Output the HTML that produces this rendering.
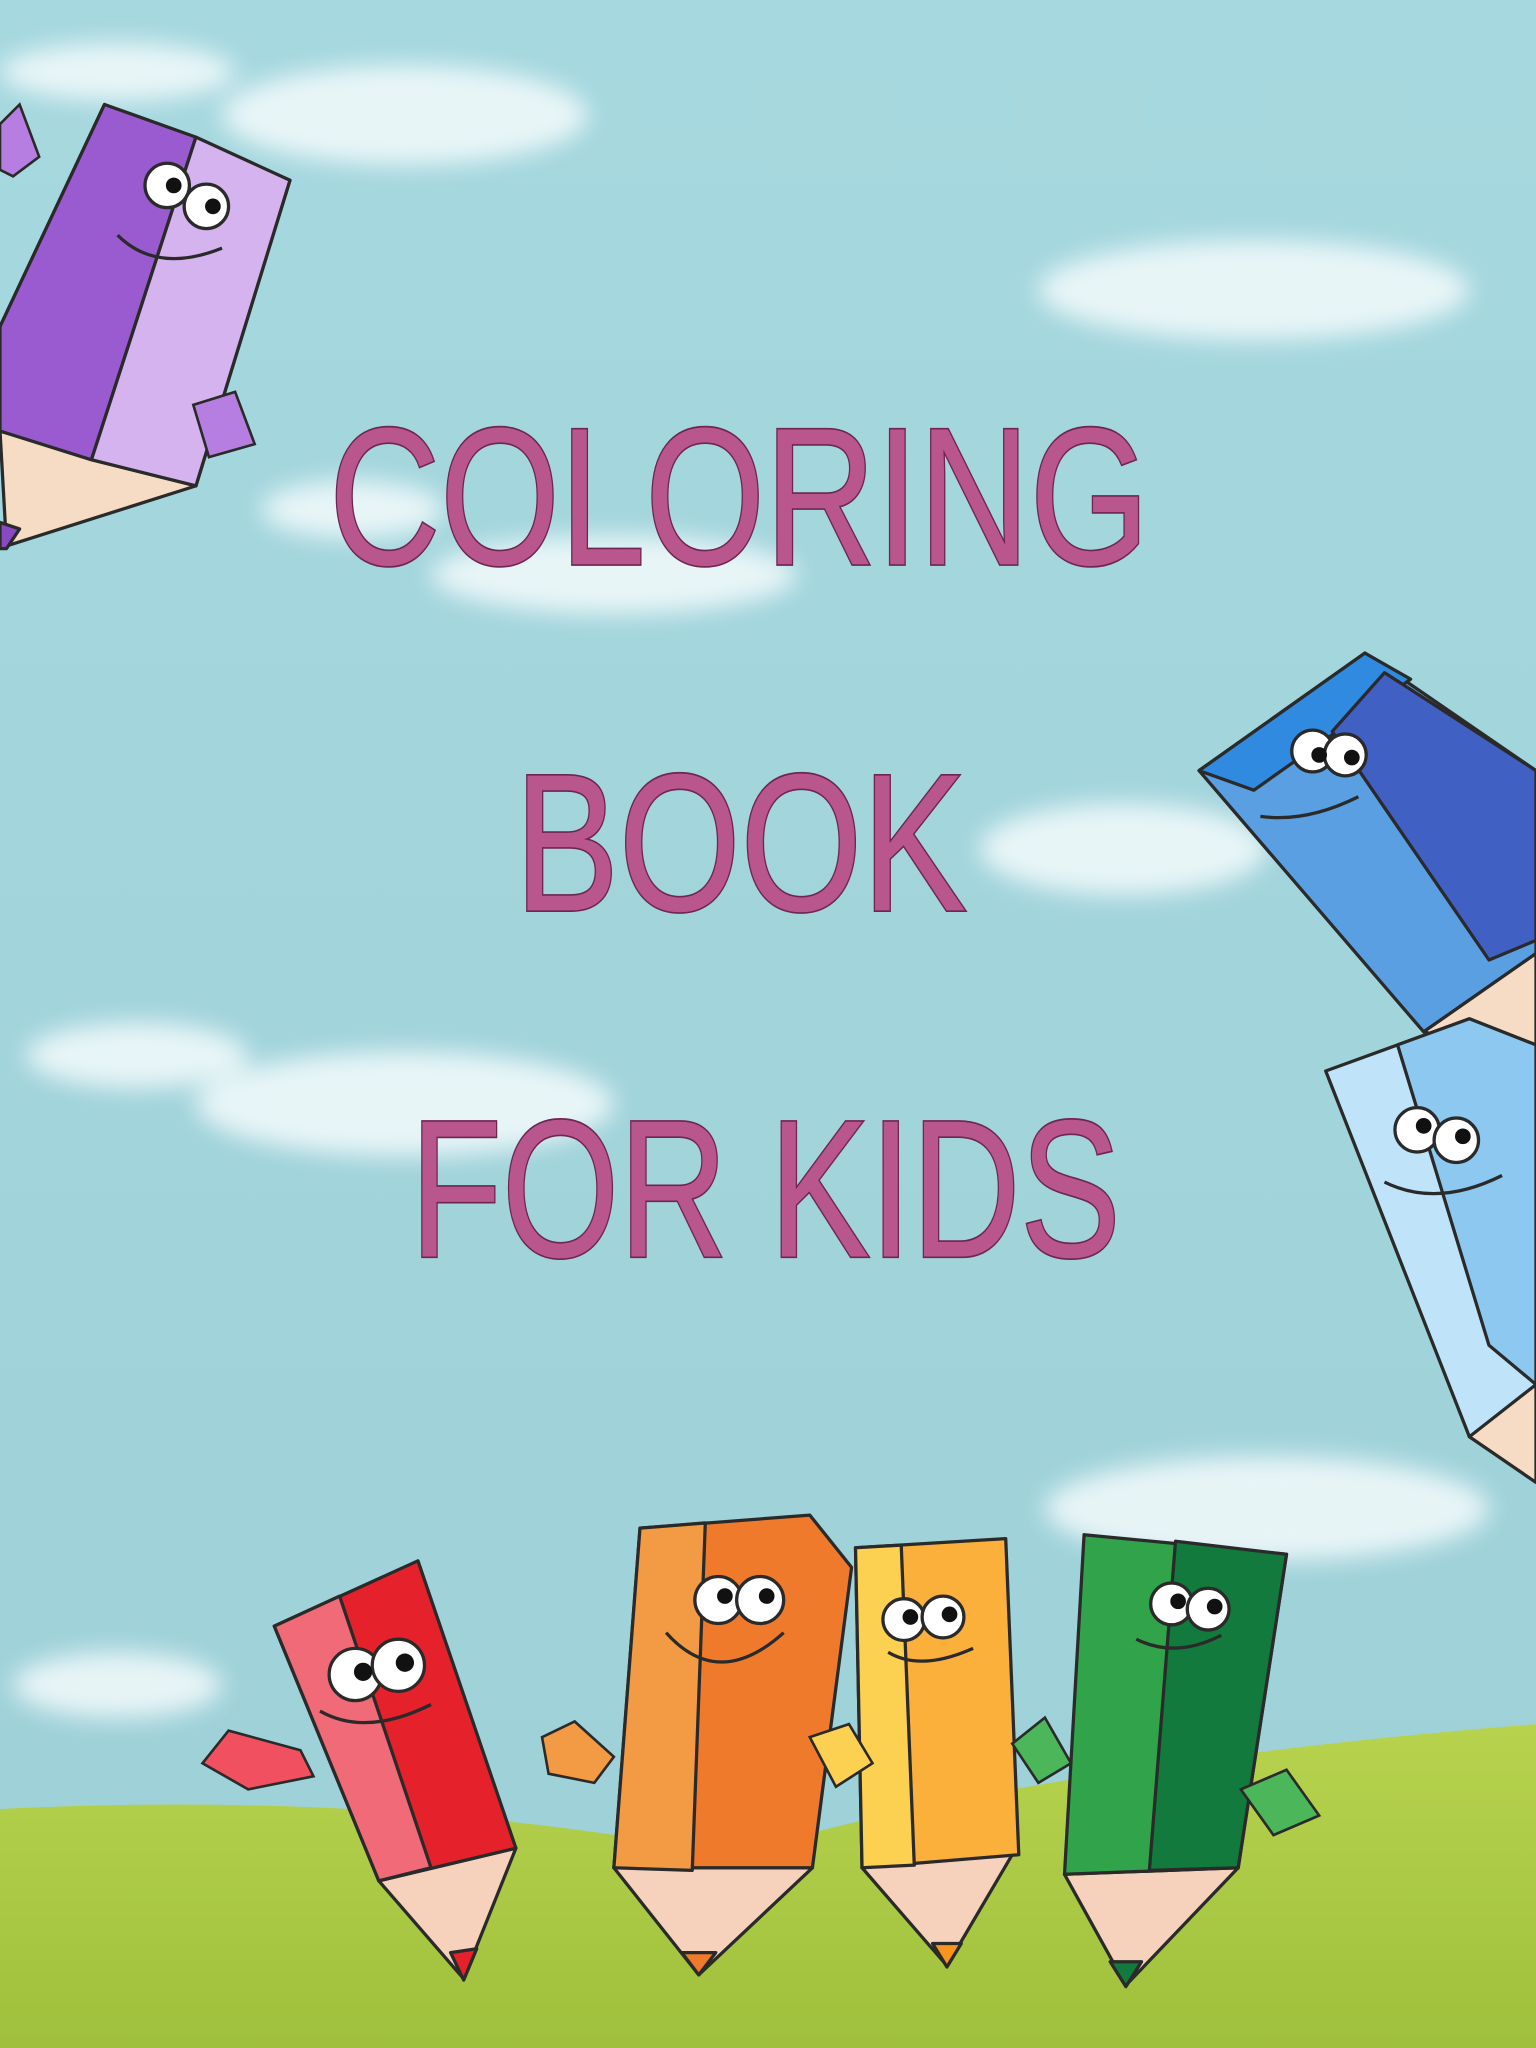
<!DOCTYPE html>
<html><head><meta charset="utf-8"><style>
html,body{margin:0;padding:0;width:1536px;height:2048px;overflow:hidden;background:#a3d6dc}
svg{display:block}
</style></head><body>
<svg width="1536" height="2048" viewBox="0 0 1176 1568" xmlns="http://www.w3.org/2000/svg">
<defs>
<linearGradient id="sky" x1="0" y1="0" x2="0" y2="1"><stop offset="0" stop-color="#a6d8df"/><stop offset="1" stop-color="#9ed0d8"/></linearGradient>
<linearGradient id="grass" x1="0" y1="0" x2="0" y2="1"><stop offset="0" stop-color="#b7d34e"/><stop offset="1" stop-color="#9fc03c"/></linearGradient>
<filter id="blur" x="-30%" y="-50%" width="160%" height="200%"><feGaussianBlur stdDeviation="9"/></filter>
</defs>
<rect width="1176" height="1568" fill="url(#sky)"/>
<g fill="#f4fbfc" opacity="0.85" filter="url(#blur)">
<ellipse cx="90" cy="55" rx="90" ry="22"/><ellipse cx="310" cy="88" rx="140" ry="38"/>
<ellipse cx="960" cy="222" rx="165" ry="38"/><ellipse cx="270" cy="390" rx="70" ry="22"/><ellipse cx="470" cy="440" rx="140" ry="30"/>
<ellipse cx="860" cy="650" rx="110" ry="35"/><ellipse cx="105" cy="808" rx="85" ry="25"/><ellipse cx="310" cy="845" rx="160" ry="40"/>
<ellipse cx="970" cy="1155" rx="170" ry="40"/><ellipse cx="90" cy="1290" rx="80" ry="25"/>
</g>
<path d="M0 1385 Q300 1370 560 1420 Q800 1350 1176 1320 L1176 1568 L0 1568Z" fill="url(#grass)"/>
<g font-family="Liberation Sans, sans-serif" font-size="150" fill="#b8568d" stroke="#6e2550" stroke-width="2.5" style="paint-order:stroke">
<text x="252" y="432" textLength="628" lengthAdjust="spacingAndGlyphs">COLORING</text>
<text x="394" y="697" textLength="346" lengthAdjust="spacingAndGlyphs">BOOK</text>
<text x="314" y="962" textLength="544" lengthAdjust="spacingAndGlyphs">FOR KIDS</text>
</g>
<g stroke="#2a2a2a" stroke-width="2.5" stroke-linejoin="round">
<!-- purple -->
<polygon points="0,330 150,372 5,418" fill="#f6dcc5"/>
<polygon points="80,80 222,138 150,372 0,330 0,250" fill="#b57ee0"/>
<polygon points="80,80 150,105 70,352 0,330 0,250" fill="#9b5bd0"/>
<polygon points="150,105 222,138 150,372 70,352" fill="#d4b3ee"/>
<polygon points="0,400 15,405 5,420 0,420" fill="#8a48c4"/>
<!-- blue -->
<polygon points="918,590 1045,500 1176,590 1176,730 1090,790" fill="#5a9fe2"/>
<polygon points="918,590 1045,500 1080,520 960,605" fill="#2f8ae0"/>
<polygon points="1060,515 1176,590 1176,720 1140,735 1020,560" fill="#4060c4"/>
<polygon points="1090,790 1176,730 1176,800 1130,800" fill="#f6dcc5"/>
<!-- light blue -->
<polygon points="1015,820 1125,780 1176,800 1176,1130 1125,1100" fill="#bfe4fa"/>
<polygon points="1070,800 1125,780 1176,800 1176,1060 1140,1030" fill="#8cc8f0"/>
<polygon points="1125,1100 1176,1060 1176,1135" fill="#f6dcc5"/>
<!-- red -->
<polygon points="290,1440 395,1415 355,1515" fill="#f6d2bc"/>
<polygon points="210,1245 320,1195 395,1415 290,1440" fill="#e5212b"/>
<polygon points="210,1245 260,1222 330,1430 290,1440" fill="#f06a78"/>
<polygon points="345,1495 365,1492 355,1516" fill="#e5212b"/>
<!-- orange -->
<polygon points="470,1430 622,1430 535,1512" fill="#f6d2bc"/>
<polygon points="490,1170 620,1160 652,1200 622,1430 470,1430" fill="#f07a2c"/>
<polygon points="490,1170 540,1166 530,1432 470,1430" fill="#f39a45"/>
<polygon points="522,1495 548,1495 535,1512" fill="#f07a2c"/>
<!-- yellow -->
<polygon points="660,1430 775,1420 725,1505" fill="#f6d2bc"/>
<polygon points="655,1185 770,1178 780,1420 660,1430" fill="#fbb03b"/>
<polygon points="655,1185 690,1183 700,1428 660,1430" fill="#fcd050"/>
<polygon points="714,1488 736,1488 725,1506" fill="#f7941d"/>
<!-- green -->
<polygon points="815,1435 948,1430 862,1520" fill="#f6d2bc"/>
<polygon points="830,1175 985,1190 948,1430 815,1435" fill="#31a34a"/>
<polygon points="900,1180 985,1190 948,1430 880,1432" fill="#127a3c"/>
<polygon points="850,1502 874,1502 862,1521" fill="#127a3c"/>
</g>
<!-- hands -->
<g fill="#f05060" stroke="#2a2a2a" stroke-width="2"><path d="M155 1350 L175 1325 L230 1340 L240 1360 L190 1370Z"/></g>
<g fill="#f39a45" stroke="#2a2a2a" stroke-width="2"><path d="M415 1330 L440 1318 L470 1345 L455 1365 L420 1358Z"/></g>
<g fill="#fcd050" stroke="#2a2a2a" stroke-width="2"><path d="M620 1330 L650 1320 L668 1350 L640 1368Z"/></g>
<g fill="#4bb65a" stroke="#2a2a2a" stroke-width="2"><path d="M775 1335 L800 1315 L820 1350 L795 1365Z"/><path d="M950 1370 L985 1355 L1010 1390 L975 1405Z"/></g>
<g fill="#b57ee0" stroke="#2a2a2a" stroke-width="2"><path d="M0 95 L15 80 L30 120 L10 135 L0 130Z"/><path d="M148 310 L180 300 L195 340 L160 350Z"/></g>
<!-- eyes -->
<g fill="#fff" stroke="#2a2a2a" stroke-width="2.5">
<circle cx="128" cy="142" r="17"/><circle cx="158" cy="158" r="17"/>
<circle cx="1005" cy="575" r="16"/><circle cx="1030" cy="578" r="16"/>
<circle cx="1085" cy="865" r="17"/><circle cx="1115" cy="873" r="17"/>
<circle cx="272" cy="1282" r="20"/><circle cx="305" cy="1275" r="20"/>
<circle cx="550" cy="1225" r="18"/><circle cx="582" cy="1225" r="18"/>
<circle cx="692" cy="1240" r="16"/><circle cx="722" cy="1238" r="16"/>
<circle cx="897" cy="1228" r="16"/><circle cx="925" cy="1232" r="16"/>
</g>
<g fill="#111">
<circle cx="133" cy="142" r="6"/><circle cx="163" cy="158" r="6"/>
<circle cx="1010" cy="578" r="6"/><circle cx="1035" cy="580" r="6"/>
<circle cx="1090" cy="862" r="6"/><circle cx="1120" cy="870" r="6"/>
<circle cx="278" cy="1280" r="7"/><circle cx="310" cy="1273" r="7"/>
<circle cx="555" cy="1222" r="6"/><circle cx="587" cy="1222" r="6"/>
<circle cx="697" cy="1238" r="6"/><circle cx="727" cy="1236" r="6"/>
<circle cx="902" cy="1226" r="6"/><circle cx="930" cy="1230" r="6"/>
</g>
<g fill="none" stroke="#2a2a2a" stroke-width="2.5">
<path d="M90 180 Q120 210 170 190"/><path d="M965 625 Q1000 630 1040 610"/><path d="M1060 905 Q1100 925 1150 900"/>
<path d="M245 1310 Q280 1330 330 1305"/><path d="M510 1250 Q550 1295 600 1250"/><path d="M680 1265 Q705 1280 745 1262"/><path d="M870 1255 Q900 1270 935 1252"/>
</g>
</svg>
</body></html>
